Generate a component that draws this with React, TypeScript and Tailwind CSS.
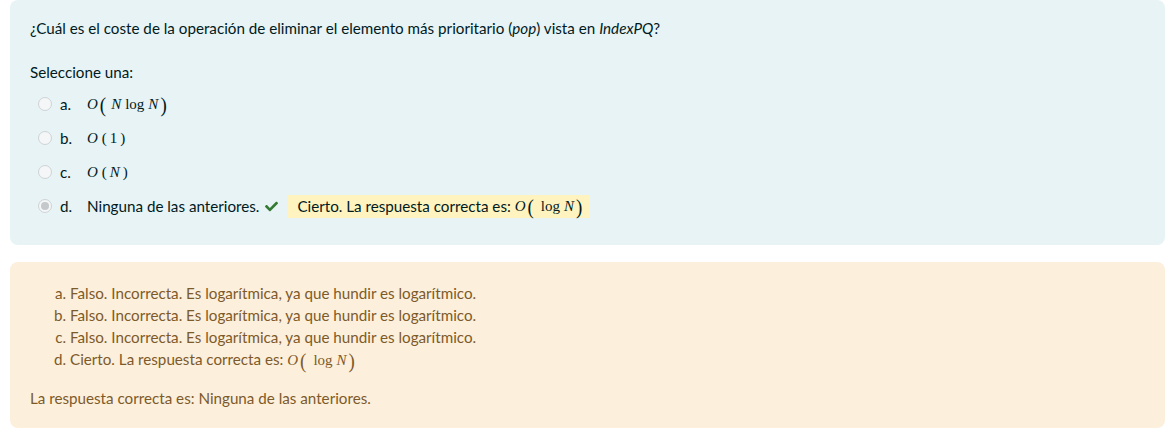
import React from 'react';

const font = { fontFamily: 'Lato, "Open Sans", sans-serif' };

function Big({ children }: { children: React.ReactNode }) {
  return <span className="mx-[2px] inline-block text-[19px] leading-none scale-y-[1.15]">{children}</span>;
}

function Math({ children }: { children: React.ReactNode }) {
  return (
    <span className="inline-flex items-center text-[15px] leading-none" style={{ fontFamily: '"Liberation Serif", "DejaVu Serif", serif' }}>
      {children}
    </span>
  );
}

const I = ({ children }: { children: React.ReactNode }) => <span className="italic">{children}</span>;

function OLogN() {
  return (
    <Math>
      <I>O</I>
      <Big>(</Big>
      <span className="ml-[5px]">log</span>
      <span className="ml-[4px]"><I>N</I></span>
      <Big>)</Big>
    </Math>
  );
}

function Radio({ checked }: { checked?: boolean }) {
  return (
    <span className="flex h-[14px] w-[14px] items-center justify-center rounded-full border border-[#cfd3d6] bg-[#f4f6f7]">
      {checked && <span className="h-[8px] w-[8px] rounded-full bg-[#c4c8cb]" />}
    </span>
  );
}

function Option({ letter, children, checked }: { letter: string; children: React.ReactNode; checked?: boolean }) {
  return (
    <div className="flex h-[34px] items-center">
      <div className="ml-[8px] w-[22px]">
        <Radio checked={checked} />
      </div>
      <span className="w-[27px]">{letter}</span>
      {children}
    </div>
  );
}

export default function App() {
  return (
    <div className="min-h-[436px] bg-white px-[10px]" style={font}>
      <div className="rounded-lg bg-[#e7f3f5] px-5 pb-[22px] pt-[17px] text-[15.2px] leading-[22px] text-[#001a1e]">
        <p>
          ¿Cuál es el coste de la operación de eliminar el elemento más prioritario (<I>pop</I>) vista en <I>IndexPQ</I>?
        </p>
        <p className="mt-[22px]">Seleccione una:</p>
        <div className="mt-[4px]">
          <Option letter="a.">
            <Math>
              <I>O</I>
              <Big>(</Big>
              <span className="ml-[3px]"><I>N</I></span>
              <span className="ml-[4px]">log</span>
              <span className="ml-[4px]"><I>N</I></span>
              <Big>)</Big>
            </Math>
          </Option>
          <Option letter="b.">
            <Math>
              <I>O</I>
              <span className="ml-[4px]">(</span>
              <span className="ml-[3px]">1</span>
              <span className="ml-[3px]">)</span>
            </Math>
          </Option>
          <Option letter="c.">
            <Math>
              <I>O</I>
              <span className="ml-[4px]">(</span>
              <span className="ml-[3px]"><I>N</I></span>
              <span className="ml-[3px]">)</span>
            </Math>
          </Option>
          <Option letter="d." checked>
            <span>Ninguna de las anteriores.</span>
            <svg viewBox="0 0 512 512" className="ml-[6px] h-[13px] w-[13px] fill-[#357a32]">
              <path d="M173.898 439.404l-166.4-166.4c-9.997-9.997-9.997-26.206 0-36.204l36.203-36.204c9.997-9.998 26.207-9.998 36.204 0L192 312.69 432.095 72.596c9.997-9.997 26.207-9.997 36.204 0l36.203 36.204c9.997 9.997 9.997 26.206 0 36.204l-294.4 294.401c-9.998 9.997-26.207 9.997-36.204-.001z" />
            </svg>
            <span className="ml-[10px] flex h-[23px] items-center bg-[#fff3bf] pl-[9px] pr-[6px]">
              Cierto. La respuesta correcta es:&nbsp;<OLogN />
            </span>
          </Option>
        </div>
      </div>

      <div className="mt-[17px] rounded-lg bg-[#fcefdc] px-5 pb-[19px] pt-[20px] text-[15.2px] leading-[22px] text-[#7d5a29]">
        <ol className="list-[lower-alpha] pl-10">
          <li>Falso. Incorrecta. Es logarítmica, ya que hundir es logarítmico.</li>
          <li>Falso. Incorrecta. Es logarítmica, ya que hundir es logarítmico.</li>
          <li>Falso. Incorrecta. Es logarítmica, ya que hundir es logarítmico.</li>
          <li>
            Cierto. La respuesta correcta es: <OLogN />
          </li>
        </ol>
        <p className="mt-[17px]">La respuesta correcta es: Ninguna de las anteriores.</p>
      </div>
    </div>
  );
}
